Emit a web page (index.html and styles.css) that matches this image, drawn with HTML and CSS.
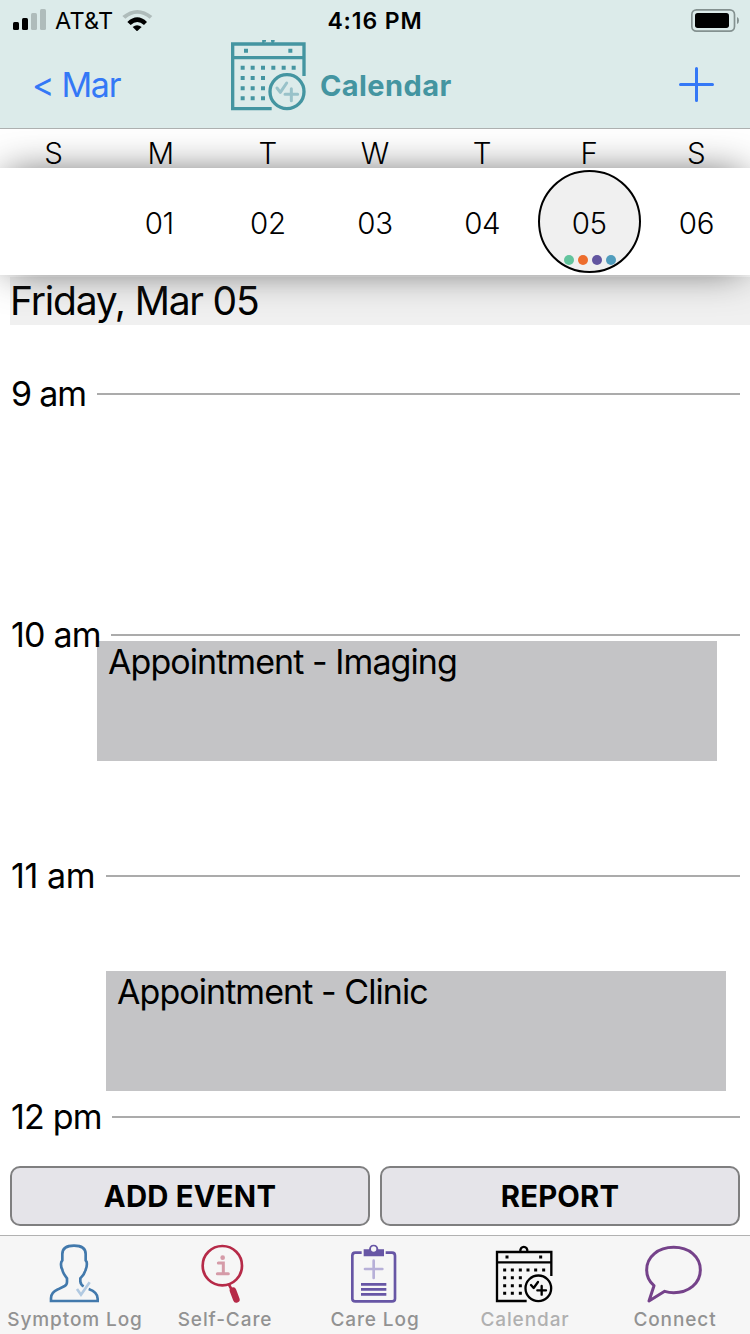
FILE: index.html
```html
<!DOCTYPE html>
<html lang="en">
<head>
<meta charset="utf-8">
<title>Calendar</title>
<link rel="stylesheet" href="styles.css">
</head>
<body>
<div class="app">
  <header class="header">
    <div class="status">
      <div class="carrier">
        <svg class="signal" viewBox="0 0 33 21" width="33" height="21">
          <rect x="0" y="13" width="6" height="8" rx="1.5"/>
          <rect x="9" y="9" width="6" height="12" rx="1.5"/>
          <rect class="dim" x="18" y="4" width="6" height="17" rx="1.5"/>
          <rect class="dim" x="27" y="0" width="6" height="21" rx="1.5"/>
        </svg>
        <span class="carrier-name">AT&amp;T</span>
        <svg class="wifi" viewBox="367 26 92 68" width="30.67" height="22.67">
          <path class="dim" d="M368 47Q413 11 458 47L450 55Q413 26 377 55Z"/>
          <path d="M383 65Q413 37 442 65L433 74Q413 56 393 74Z"/>
          <path d="M399 80Q412 69 426 80L412 93Z"/>
        </svg>
      </div>
      <span class="time">4:16 PM</span>
      <svg class="battery" viewBox="573 24 144 69" width="48" height="23">
        <rect x="575.5" y="26.5" width="128" height="64" rx="14" fill="none" stroke="#849190" stroke-width="5"/>
        <rect x="585" y="36" width="102" height="45" rx="8"/>
        <path d="M711 48Q717 50 717 58.500T711 69Z" fill="#849190"/>
      </svg>
    </div>
    <nav class="nav">
      <a class="back">&lt; Mar</a>
      <div class="heading">
        <svg class="logo" viewBox="30 30 228 213" width="76" height="71">
          <g fill="none" stroke="#4495a1" stroke-width="10">
            <path d="M252 138V42H38V236H155M38 83H252"/>
            <circle cx="201" cy="185" r="51"/>
            <path d="M130 42V32H138M158 42V32M153 32H164" stroke-width="7"/>
          </g>
          <path d="M78 62h.01M211 62h.01M68 113h.01M98 113h.01M129 113h.01M160 113h.01M191 113h.01M221 113h.01M68 144h.01M98 144h.01M129 144h.01M68 175h.01M98 175h.01M129 175h.01M68 205h.01M98 205h.01M129 205h.01" stroke="#4495a1" stroke-width="12" stroke-linecap="square"/>
          <path d="M171 174L181 187L200 159M195 193H233M214 176V212" fill="none" stroke="#99c2c9" stroke-width="9" stroke-linecap="round" stroke-linejoin="round"/>
        </svg>
        <h1 class="title">Calendar</h1>
      </div>
      <svg class="add" viewBox="0 0 35 35" width="35" height="35">
        <path d="M1.500 17.500H33.500M17.500 1.500V33.500" stroke="#3478f6" stroke-width="3" stroke-linecap="round"/>
      </svg>
    </nav>
  </header>

  <div class="weekdays"><span>S</span><span>M</span><span>T</span><span>W</span><span>T</span><span>F</span><span>S</span></div>
  <div class="dates">
    <span></span><span class="first">01</span><span>02</span><span>03</span><span>04</span>
    <span class="selected">05
      <span class="dots"><i class="green"></i><i class="orange"></i><i class="purple"></i><i class="blue"></i></span>
    </span>
    <span>06</span>
  </div>

  <main class="day">
    <h2 class="day-title">Friday, Mar 05</h2>
    <div class="timeline">
      <section class="hour"><div class="hour-head"><span class="h9">9 am</span></div></section>
      <section class="hour"><div class="hour-head"><span class="h10">10 am</span></div>
        <div class="event imaging">Appointment - Imaging</div></section>
      <section class="hour"><div class="hour-head"><span class="h11">11 am</span></div>
        <div class="event clinic">Appointment - Clinic</div></section>
      <section class="hour last"><div class="hour-head"><span class="h12">12 pm</span></div></section>
    </div>
    <div class="actions"><button>ADD EVENT</button><button>REPORT</button></div>
  </main>

  <footer class="tabs">
    <div class="tab">
      <svg viewBox="135 30 180 198" fill="none" stroke-width="8">
        <path d="M266 177C286 184 293 193 293 206V213H153V205C153 191 160 184 174 178L194 168Q201 164 201 156V145C194 136 188 128 187 119Q181 108 184 96L187 91V72C187 54 200 47 222 47S257 54 257 72V91L260 96Q262 108 257 119C255 128 249 137 241 145V154Q242 164 251 169" stroke="#4279ac"/>
        <path d="M231 177L243 194L269 157" stroke="#b1c9e1"/>
      </svg>
      <span>Symptom Log</span>
    </div>
    <div class="tab">
      <svg viewBox="585 30 180 198" fill="none">
        <circle cx="667" cy="107" r="59" stroke="#b62a48" stroke-width="8"/>
        <path d="M687 164L696 181" stroke="#b62a48" stroke-width="8"/>
        <path d="M699 182L709 208" stroke="#b62a48" stroke-width="20" stroke-linecap="round"/>
        <path d="M655 99H670V129M652 131H685" stroke="#d59ba8" stroke-width="9" stroke-linecap="round"/>
        <circle cx="668" cy="83" r="7" fill="#d59ba8"/>
      </svg>
      <span>Self-Care</span>
    </div>
    <div class="tab">
      <svg viewBox="285 30 180 198" fill="none">
        <path d="M335 68H316Q307 68 307 77V206Q307 214 316 214H426Q435 214 435 206V77Q435 68 426 68H407" stroke="#6756a5" stroke-width="8"/>
        <path fill-rule="evenodd" d="M341 58H357Q358 44 371 44T385 58H402V79H341ZM371 49A8 8 0 1 0 371 65A8 8 0 1 0 371 49Z" fill="#6756a5"/>
        <path d="M371 92V144M345 117H397" stroke="#b7b0d8" stroke-width="8" stroke-linecap="round"/>
        <path d="M333 163H409M333 178H409M333 193H409" stroke="#6756a5" stroke-width="8"/>
      </svg>
      <span>Care Log</span>
    </div>
    <div class="tab active">
      <svg viewBox="75 30 180 198" fill="none" stroke="#000">
        <path d="M244 138V66H81V213H170M81 97H244" stroke-width="7"/>
        <path d="M151 65C149 46 174 46 172 65" stroke-width="7"/>
        <circle cx="205" cy="175" r="38.500" stroke-width="7"/>
        <path d="M111 81h.01M212 81h.01M104 120h.01M127 120h.01M151 120h.01M174 120h.01M197 120h.01M221 120h.01M104 143h.01M127 143h.01M151 143h.01M104 167h.01M127 167h.01M151 167h.01M104 190h.01M127 190h.01M151 190h.01" stroke-width="9" stroke-linecap="square"/>
        <path d="M183 165L191 174L204 156M202 181H228M215 168V194" stroke-width="7" stroke-linecap="round" stroke-linejoin="round"/>
      </svg>
      <span>Calendar</span>
    </div>
    <div class="tab">
      <svg viewBox="525 30 180 198" fill="none">
        <path d="M552 167C538 155 530 140 530 120C530 80 565 52 611 52S691 80 691 120S656 188 611 188Q597 188 584 184L537 213Z" stroke="#75428a" stroke-width="9" stroke-linejoin="round"/>
      </svg>
      <span>Connect</span>
    </div>
  </footer>
</div>
</body>
</html>
```
FILE: styles.css
```css
* { box-sizing: border-box; }
body { margin: 0; background: #fff; color: #000; font-family: Inter, "Liberation Sans", sans-serif; }
h1, h2 { margin: 0; font-weight: 400; }
.app { width: 750px; height: 1334px; display: flex; flex-direction: column; overflow: hidden; white-space: nowrap; }

.header { height: 129px; flex: none; background: #dcebea; border-bottom: 1px solid #adb0b0; position: relative; z-index: 3; }
.status { height: 40px; display: grid; grid-template-columns: 1fr auto 1fr; align-items: center; padding: 0 11px 0 13px; }
.carrier { display: flex; align-items: center; }
.signal { margin-top: -1px; }
.carrier-name { font-size: 23.5px; letter-spacing: .2px; margin-left: 9px; width: 59px; }
.wifi { margin-left: 8px; }
.dim { fill: #afbcbb; }
.time { font-size: 23px; font-weight: 600; letter-spacing: .9px; margin: 2px 2px 0 0; }
.battery { justify-self: end; }
.nav { height: 88px; display: grid; grid-template-columns: 198px 1fr 35px; align-items: center; padding: 0 36px 0 32px; }
.back { color: #3478f6; font-size: 34px; letter-spacing: -1.3px; }
.heading { display: flex; align-self: start; gap: 14px; height: 88px; align-items: center; }
.logo { align-self: flex-start; }
.title { font-size: 29px; font-weight: 700; color: #4495a1; margin-top: 2px; letter-spacing: .4px; }

.weekdays, .dates { display: grid; grid-template-columns: repeat(7, 1fr); text-align: center; font-weight: 300; font-size: 29.5px; flex: none; }
.weekdays { height: 39px; line-height: 48px; position: relative; z-index: 2; }
.dates { height: 107px; align-items: center; background: #fff; box-shadow: 0 0 40px -7px rgb(80, 80, 80); position: relative; z-index: 1; letter-spacing: -.4px; line-height: 35px; }
.dates > span { padding-top: 3px; }
.dates > .first { padding-right: 3px; }
.dates > .selected { width: 103px; height: 103px; justify-self: center; border: 2px solid #000; border-radius: 50%; background: #f0f0f0; display: flex; flex-direction: column; align-items: center; padding-top: 34px; }
.dots { display: flex; gap: 4px; margin: 14px 0 0 2px; }
.dots i { width: 10px; height: 10px; border-radius: 50%; }
.green { background: #62c49d; }
.orange { background: #ed6d2d; }
.purple { background: #6255a0; }
.blue { background: #519dbd; }

.day { flex: 1; display: flex; flex-direction: column; padding-top: 2px; }
.day-title { margin-left: 10px; height: 48px; line-height: 48px; background: #f0f0f0; font-size: 39px; letter-spacing: -1.2px; }
.timeline { padding: 47px 10px 0; height: 841px; }
.hour { height: 241px; }
.hour.last { height: 44px; }
.hour-head { display: flex; align-items: center; gap: 10px; height: 44px; font-size: 34px; position: relative; z-index: 1; }
.hour-head span { padding: 0 0 2px 1px; letter-spacing: -.8px; }
.hour-head::after { content: ""; flex: 1; height: 2px; background: #ababab; }
.hour-head .h9 { width: 77px; letter-spacing: -1.2px; }
.h10 { width: 91px; }
.hour-head .h11 { width: 86px; letter-spacing: -.4px; }
.h12 { width: 92px; }
.event { width: 620px; height: 120px; background: #c4c4c6; font-size: 34px; line-height: 41px; padding-left: 11px; letter-spacing: -.94px; }
.imaging { margin: -16px 0 0 87px; }
.clinic { margin: 73px 0 0 96px; }
.actions { display: grid; grid-template-columns: 1fr 1fr; gap: 10px; padding: 0 10px; }
.actions button { height: 60px; border: 2px solid #7f7f80; border-radius: 10px; background: #e5e4e9; color: #000; font: 700 29.3px Inter, sans-serif; letter-spacing: .2px; padding: 0; }

.tabs { height: 99px; flex: none; border-top: 1px solid #b2b2b2; background: #f6f6f6; display: grid; grid-template-columns: repeat(5, 150px); }
.tab { display: flex; flex-direction: column; align-items: center; padding-top: 4px; color: #929292; font-size: 19px; font-weight: 450; line-height: 28px; letter-spacing: .9px; }
.tab svg { width: 60px; height: 66px; flex: none; }
.tab.active { color: #b0b0b0; }
```
